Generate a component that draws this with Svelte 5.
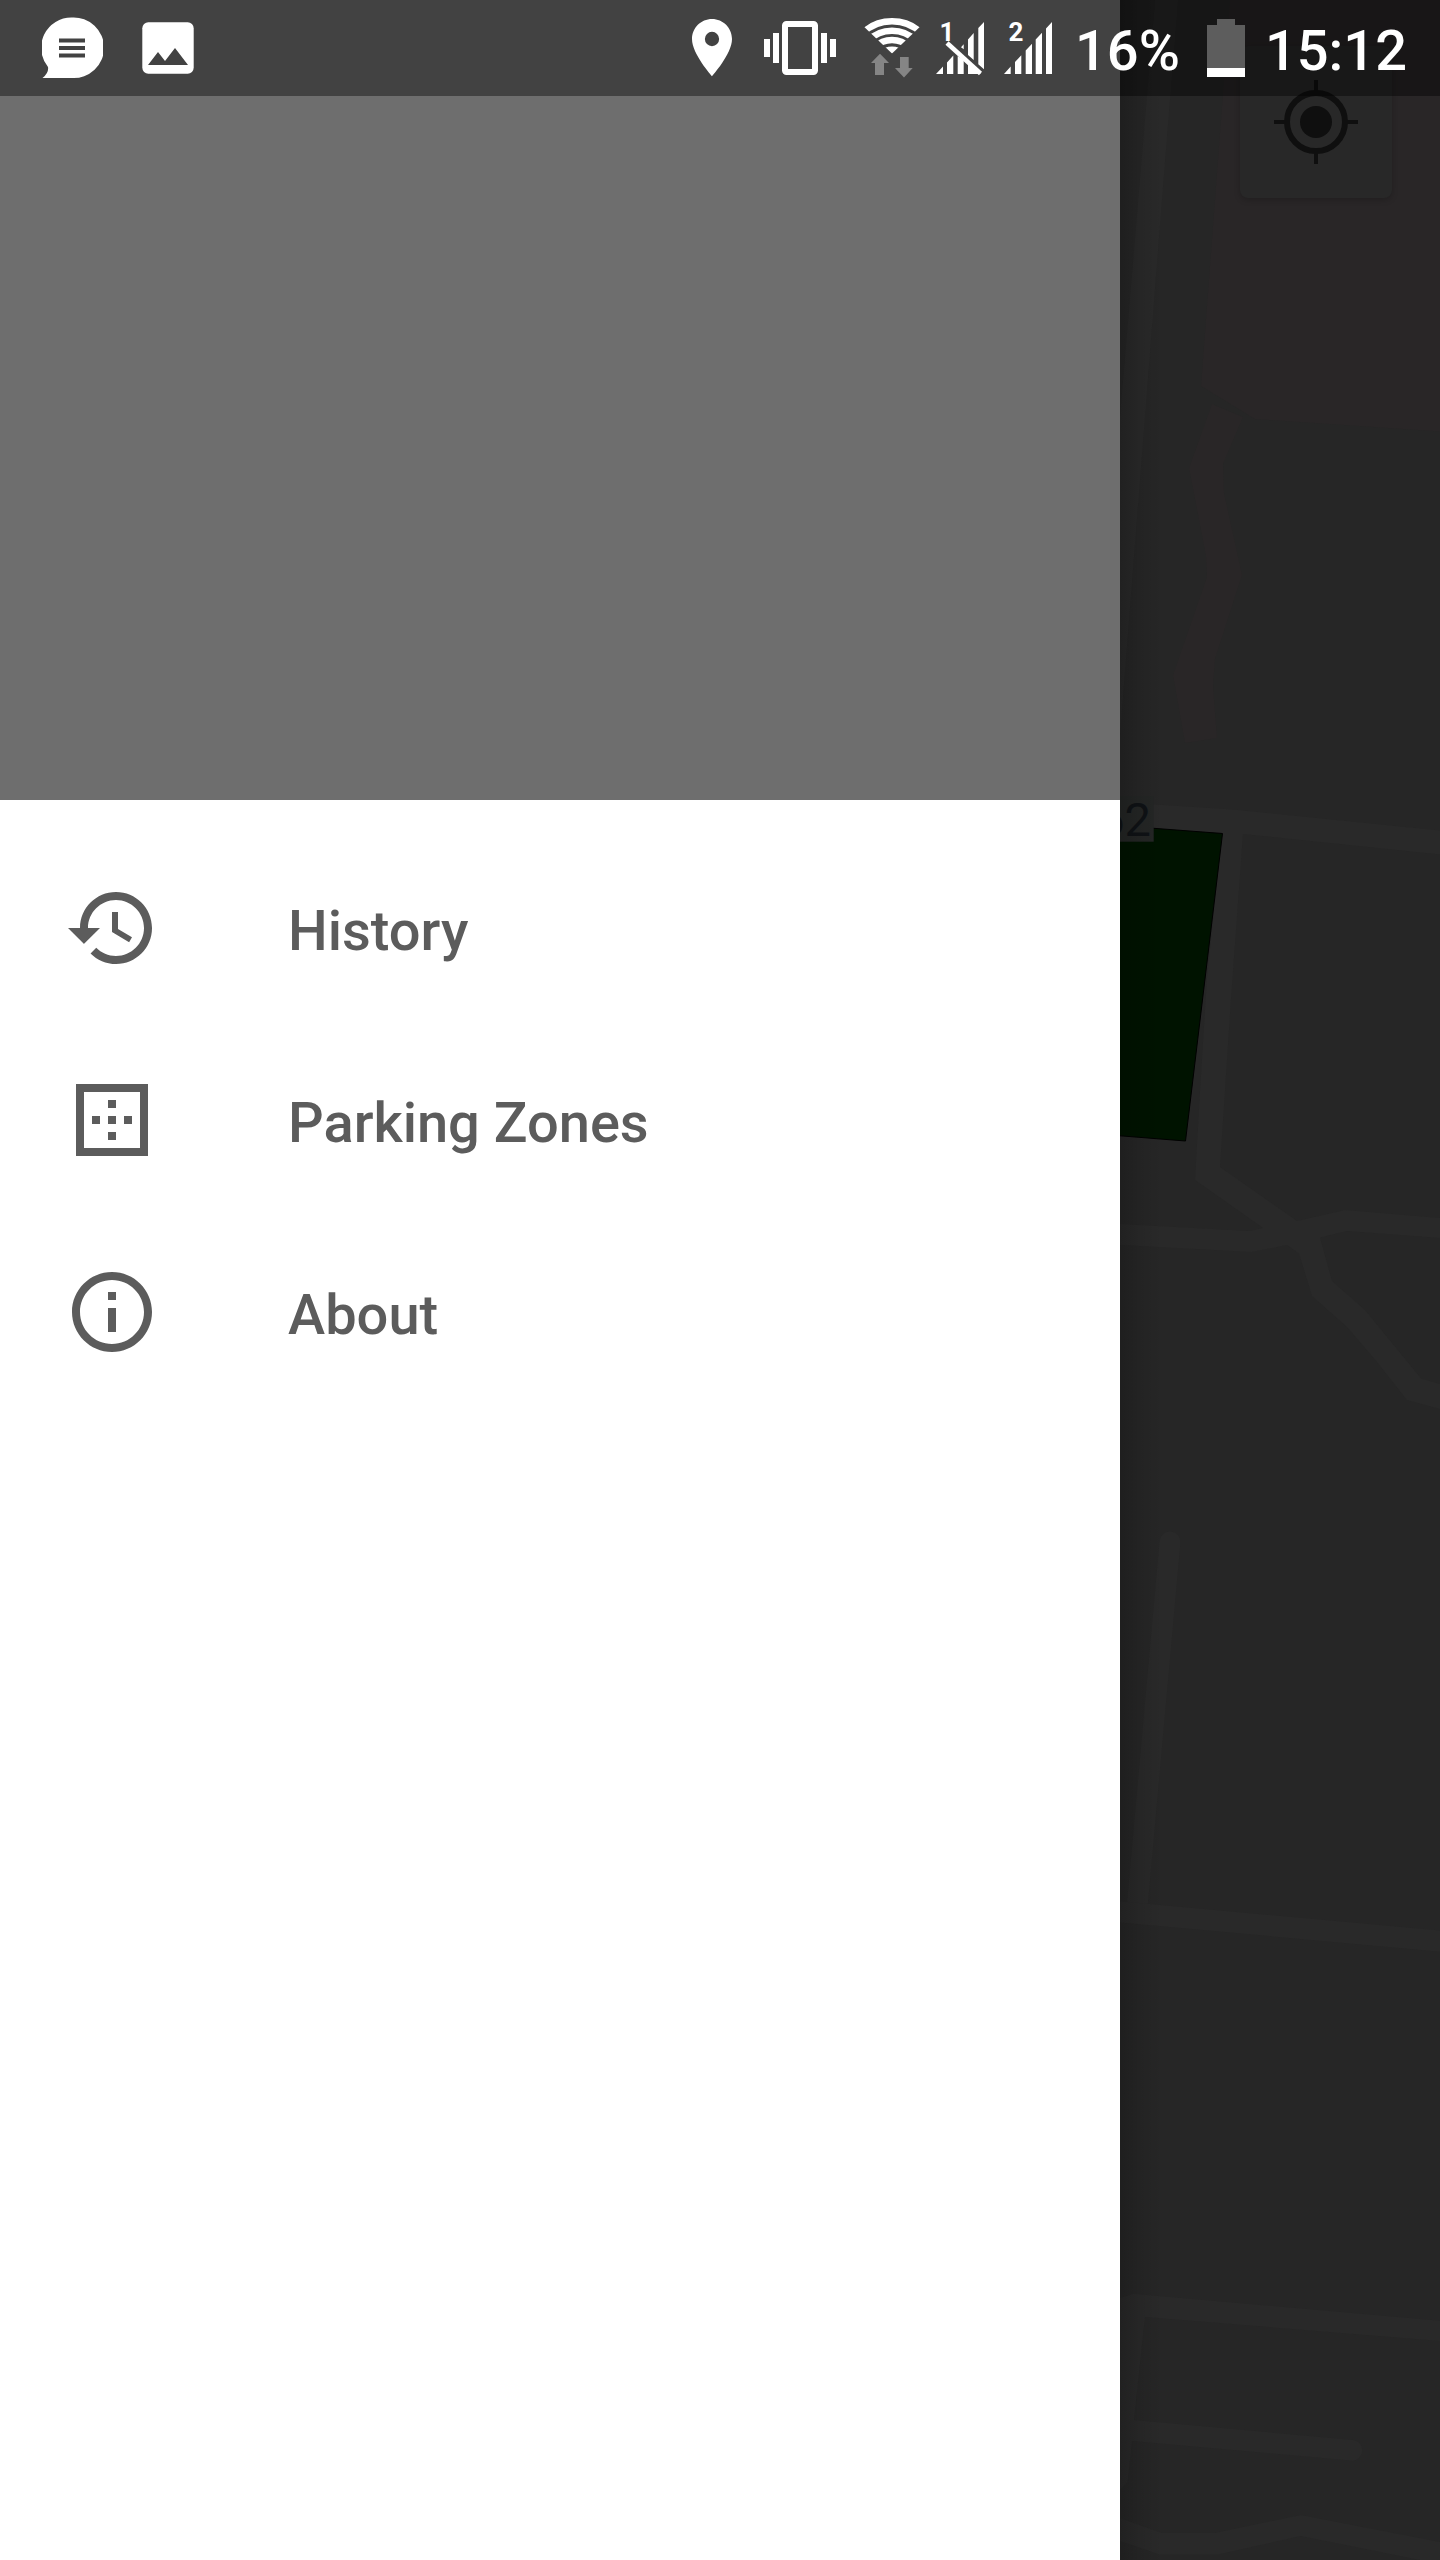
<script>
  const items = [
    {
      label: 'History',
      path: 'M13 3c-4.97 0-9 4.03-9 9H1l3.89 3.89.07.14L9 12H6c0-3.87 3.13-7 7-7s7 3.13 7 7-3.13 7-7 7c-1.93 0-3.68-.79-4.94-2.06l-1.42 1.42C8.27 19.99 10.51 21 13 21c4.97 0 9-4.03 9-9s-4.03-9-9-9zm-1 5v5l4.28 2.54.72-1.21-3.5-2.08V8H12z'
    },
    {
      label: 'Parking Zones',
      path: 'M13 7h-2v2h2V7zm0 4h-2v2h2v-2zm4 0h-2v2h2v-2zM3 3v18h18V3H3zm16 16H5V5h14v14zm-6-4h-2v2h2v-2zm-4-4H7v2h2v-2z'
    },
    {
      label: 'About',
      path: 'M11 17h2v-6h-2v6zm1-15C6.48 2 2 6.48 2 12s4.48 10 10 10 10-4.48 10-10S17.52 2 12 2zm0 18c-4.41 0-8-3.59-8-8s3.59-8 8-8 8 3.59 8 8-3.59 8-8 8zM11 9h2V7h-2v2z'
    }
  ];
</script>

<div class="screen">
  <aside class="drawer">
    <div class="header"></div>
    <nav>
      {#each items as item}
        <a class="item" href="#top">
          <svg width="96" height="96" viewBox="0 0 24 24"><path d={item.path} /></svg>
          <span>{item.label}</span>
        </a>
      {/each}
    </nav>
  </aside>

  <main class="map">
    <!-- Dimmed map canvas beside the open drawer -->
    <svg class="canvas" width="320" height="2560" viewBox="1120 0 320 2560">
      <defs>
        <linearGradient id="edge" x1="0" x2="1" y1="0" y2="0">
          <stop offset="0" stop-color="#000" stop-opacity="0.2" />
          <stop offset="0.45" stop-color="#000" stop-opacity="0.08" />
          <stop offset="1" stop-color="#000" stop-opacity="0" />
        </linearGradient>
      </defs>
      <rect x="1120" width="320" height="2560" fill="#262626" />
      <g fill="#292627">
        <path d="M1230 0H1440V431.5L1255 419L1201 386Z" />
        <path d="M1212 404L1243 417L1223 464L1224 493L1242 575L1215 659L1213 686L1217 738L1185 743L1173 675L1207 577L1206 556L1189 468Z" />
      </g>
      <g fill="#292929">
        <path d="M1155 0H1178L1162 200L1120 736V416Z" />
        <path d="M1120 803L1148 804L1233 809.5L1440 830.5V854.5L1243 834L1231 999L1220 1167L1297 1221L1345 1210L1440 1218V1238L1347 1231L1320 1237.500L1332 1281L1365 1310L1421 1378.500L1440 1384V1409L1407 1400L1377 1362L1347 1327L1312 1296L1299 1253.500L1287 1245L1252 1252L1120 1245V1224L1250 1231L1263 1228L1195 1180L1200 1091L1207 978L1222 833L1120 827Z" />
        <path d="M1120 2298L1133 2293.700L1440 2320.700V2341L1145 2317L1134 2420L1353 2440A10.400 10.400 0 0 1 1353 2460.700L1132 2441L1127.700 2482L1120 2490Z" />
        <path d="M1120 2518L1162 2533H1215L1300.700 2515L1440 2542V2560H1420L1300.700 2536L1217 2554.700H1160L1120 2541Z" />
      </g>
      <g fill="none" stroke="#292929" stroke-width="21">
        <path d="M1170 1542L1137 1908" stroke-linecap="round" />
        <path d="M1110 1911L1450 1942" />
      </g>
      <path d="M1110 825L1222.500 833.500L1185.500 1141L1110 1135" fill="#001300" stroke="#000" stroke-width="1" />
      <rect x="1110" y="796" width="43.700" height="45.700" fill="#242625" />
      <text x="1151" y="835.500" text-anchor="end" class="label">62</text>
      <rect x="1120" width="43" height="2560" fill="url(#edge)" />
    </svg>

    <button class="locate" aria-label="My location">
      <svg width="84" height="84" viewBox="-42 -42 84 84">
        <circle r="16" fill="#0f0f0f" />
        <circle r="29" fill="none" stroke="#0f0f0f" stroke-width="6" />
        <path d="M0-42V-30M0 30V42M-42 0H-30M30 0H42" stroke="#0f0f0f" stroke-width="4" />
      </svg>
    </button>
  </main>

  <header class="status">
    <div class="side">
      <svg class="chat" width="61" height="62" viewBox="42 17 61 62">
        <path fill="#fff" d="M72 17.500A30.300 30.300 0 1 1 72 78H42.500Q49 73 48 67A30.300 30.300 0 0 1 72 17.500Z" />
        <path d="M59 40.500H85M59 48H85M59 55.500H85" stroke="#424242" stroke-width="4" />
      </svg>
      <svg width="52" height="52" viewBox="142 22 52 52">
        <rect x="142.300" y="22.300" width="51.400" height="51.400" rx="6" fill="#fff" />
        <path d="M148 65L158 52L165 61L175 48L188 65Z" fill="#424242" />
      </svg>
    </div>

    <div class="side">
      <svg width="40" height="58" viewBox="5 2 14 20.300">
        <path fill="#fff" d="M12 2C8.130 2 5 5.130 5 9c0 5.250 7 13 7 13s7-7.750 7-13c0-3.870-3.130-7-7-7zm0 9.500a2.500 2.500 0 0 1 0-5 2.500 2.500 0 0 1 0 5z" />
      </svg>
      <svg class="vibrate" width="72" height="54" viewBox="764 21 72 54">
        <rect x="785" y="24" width="30" height="48" rx="1.500" fill="none" stroke="#fff" stroke-width="6" />
        <path fill="#fff" d="M764 39h6v18h-6zM773 33h6v30h-6zM821 33h6v30h-6zM830 39h6v18h-6z" />
      </svg>
      <svg class="wifi" width="56" height="60" viewBox="864 18 56 60">
        <clipPath id="fan"><path d="M892 53.500L850 13.500H934Z" /></clipPath>
        <g clip-path="url(#fan)" fill="none" stroke="#fff" stroke-width="6.500">
          <circle cx="892" cy="64.500" r="43.200" />
          <circle cx="892" cy="64.500" r="33.800" />
          <circle cx="892" cy="64.500" r="24.500" />
          <circle cx="892" cy="64.500" r="14.500" stroke-width="7" />
        </g>
        <path fill="#858585" d="M880 53.700L889 63H884V75H875V63H871ZM900 57H908.700V68H912.700L904 77.500L895 68H900Z" />
      </svg>
      <svg class="signal first" width="50" height="52" viewBox="935 22 50 52">
        <path fill="#fff" d="M936 74L943 66.500V74ZM947 74V62.500L953.300 55.500V74ZM957.700 74V56L963.700 60V74ZM968 74V62L981 74ZM961 47.300L963.700 44.300V49.300ZM968 55V39.500L973.700 33V60ZM978.300 64.300V28L984 22V69.300Z" />
        <path d="M947 43L980.500 73.500" stroke="#fff" stroke-width="4.500" />
        <text x="939.500" y="40.700" class="sim">1</text>
      </svg>
      <svg class="signal" width="50" height="52" viewBox="1003 22 50 52">
        <path fill="#fff" d="M1004 74L1010.700 66.500V74ZM1015 74V62L1021.300 55.200V74ZM1025.700 74V50.500L1032 43.700V74ZM1035.700 74V39.600L1042 32.800V74ZM1046 74V28.500L1052 22V74Z" />
        <text x="1008.500" y="40.700" class="sim">2</text>
      </svg>
      <span class="percent">16%</span>
      <svg class="battery" width="38" height="58" viewBox="1207 19 38 58">
        <path fill="#5d5d5d" d="M1217 19h18v6h10v43h-38V25h10z" />
        <path fill="#fff" d="M1207 68h38v9h-38z" />
      </svg>
      <span class="clock">15:12</span>
    </div>
  </header>
</div>

<style>
  :global(body) {
    margin: 0;
  }
  .screen {
    position: relative;
    display: flex;
    width: 1440px;
    height: 2560px;
    overflow: hidden;
    background: #262626;
    font-family: Roboto, sans-serif;
  }
  svg {
    display: block;
    flex: none;
  }
  .drawer {
    width: 1120px;
    background: #fff;
  }
  .header {
    height: 800px;
    background: #6e6e6e;
  }
  nav {
    display: flex;
    flex-direction: column;
    padding-top: 32px;
  }
  .item {
    display: flex;
    align-items: center;
    gap: 128px;
    height: 192px;
    padding-left: 64px;
    color: #5c5c5c;
    fill: #5c5c5c;
    font-size: 56px;
    font-weight: 500;
    text-decoration: none;
  }
  .item span {
    padding-top: 5px;
  }
  .map {
    position: relative;
    width: 320px;
  }
  .label {
    font-size: 47px;
    fill: #0f1215;
  }
  .locate {
    position: absolute;
    left: 120px;
    top: 46px;
    display: grid;
    place-items: center;
    width: 152px;
    height: 152px;
    padding: 0;
    border: 0;
    border-radius: 8px;
    background: #282828;
    box-shadow: 0 2px 6px rgba(0, 0, 0, 0.2);
  }
  .status {
    position: absolute;
    inset: 0 0 auto 0;
    display: flex;
    justify-content: space-between;
    box-sizing: border-box;
    height: 96px;
    padding: 0 33px 0 42px;
    background: rgba(0, 0, 0, 0.4);
    color: #fff;
    font-size: 56px;
    font-weight: 500;
  }
  .side {
    display: flex;
    align-items: center;
  }
  .chat {
    margin-right: 39px;
  }
  .vibrate {
    margin-left: 32px;
  }
  .wifi {
    margin: 0 15px 0 28px;
  }
  .signal {
    margin-right: 22px;
    overflow: visible;
  }
  .signal.first {
    margin-right: 18px;
  }
  .sim {
    font-size: 26px;
    font-weight: 700;
    fill: #fff;
  }
  .percent {
    padding-top: 5px;
  }
  .battery {
    margin: 0 20px 0 27px;
  }
  .clock {
    padding-top: 5px;
  }
</style>
